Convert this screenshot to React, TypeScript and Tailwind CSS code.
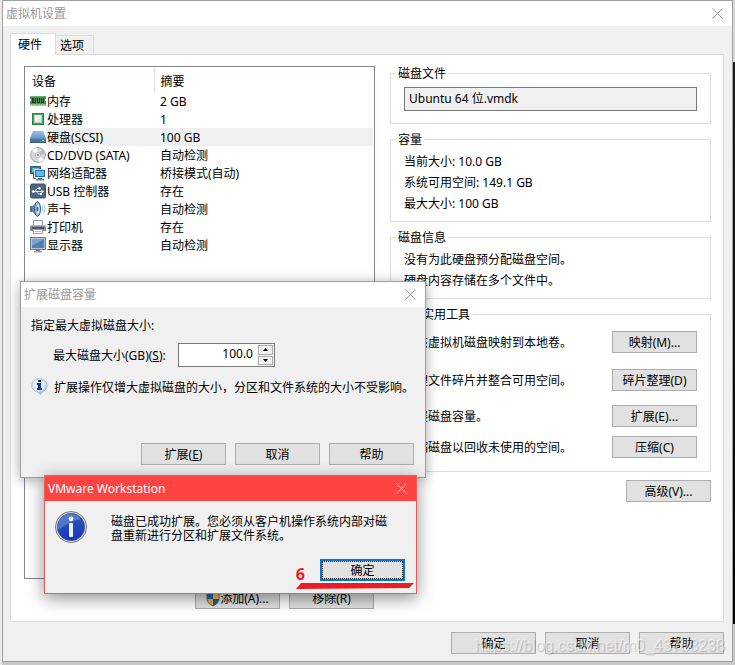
import type { ReactNode } from "react";

type Device = { name: string; summary: string; icon: ReactNode; selected?: boolean };

const MemoryIcon = () => (
    <svg width="16" height="16" viewBox="0 0 16 16" shapeRendering="crispEdges">
        <path d="M0 3h16v3h-1v2h1v5H0V8h1V6H0z" fill="#3a9a47" />
        <path d="M0 3h16v1H0z" fill="#5db867" />
        <path d="M0 11h16v2H0z" fill="#7cc57e" />
        <path d="M2 5h4v5H2zM7 5h3v5H7zM11 5h3v5h-3z" fill="#2c342d" />
        <path d="M4 5h1v4H4zM8 5h1v4H8zM12 5h1v4h-1z" fill="#69746a" />
        <path d="M1 12h1v1H1zM3 12h1v1H3zM5 12h1v1H5zM9 12h1v1H9zM11 12h1v1h-1zM13 12h1v1h-1z" fill="#e8d98a" />
    </svg>
);

const CpuIcon = () => (
    <svg width="16" height="16" viewBox="0 0 16 16" shapeRendering="crispEdges">
        <path d="M2 2h12v12H2z" fill="#1f8539" />
        <path d="M3 3h10v10H3z" fill="#4bab59" />
        <path d="M4 4h8v8H4z" fill="#c3c9c4" />
        <path d="M5 4h6v7H5z" fill="#f1f2f1" />
        <path d="M8 8h3v3H8z" fill="#dfe2df" />
    </svg>
);

const DiskIcon = () => (
    <svg width="16" height="16" viewBox="0 0 16 16">
        <defs>
            <linearGradient id="disk" x1="0" y1="0" x2="0" y2="1">
                <stop offset="0" stopColor="#9cc0e6" />
                <stop offset="1" stopColor="#6a98c9" />
            </linearGradient>
        </defs>
        <path d="M3 2h10l3 7H0z" fill="url(#disk)" />
        <path d="M0 9h16v5H0z" fill="#4a739f" />
        <path d="M0 9h16v1H0z" fill="#6a93bf" />
        <path d="M0 13h16v1H0z" fill="#365a80" />
        <path d="M12 11h2v1h-2z" fill="#8af08a" />
    </svg>
);

const DiscIcon = () => (
    <svg width="16" height="16" viewBox="0 0 16 16">
        <circle cx="8" cy="8" r="7.400" fill="#d5d9dd" stroke="#8d949b" strokeWidth=".8" />
        <path d="M8 8 2 3.500A7 7 0 0 1 7 1zM8 8l6 4.500A7 7 0 0 1 9 15z" fill="#f8f9fa" />
        <path d="M8 8 12.500 2.500A7 7 0 0 1 15 7z" fill="#b8bec4" />
        <circle cx="8" cy="8" r="2.600" fill="#f4f5f6" stroke="#a1a7ad" strokeWidth=".7" />
        <circle cx="8" cy="8" r="1" fill="#7d848b" />
    </svg>
);

const NetworkIcon = () => (
    <svg width="16" height="16" viewBox="0 0 16 16">
        <path d="M.5 1.500h10v7H.5z" fill="#2a79b5" stroke="#35597c" />
        <path d="M2 3h7v4H2z" fill="#60b2e2" />
        <path d="M3.500 9v4.500H6" fill="none" stroke="#4a5560" />
        <path d="M4.500 4.500h11v8h-11z" fill="#1c6dac" stroke="#e9f1f7" />
        <path d="M6 6h8v5H6z" fill="#64b9ea" />
        <path d="M8 13h4v1H8z" fill="#34597d" />
        <path d="M6 14h8v1.500H6z" fill="#6b8298" />
    </svg>
);

const UsbIcon = () => (
    <svg width="16" height="16" viewBox="0 0 16 16">
        <rect x=".5" y="1" width="15" height="14" rx="1.500" fill="#4c6580" stroke="#3d536b" />
        <path d="M3 8.500h9M5 8.500 7 5.500h2M6.500 8.500l2 2.500h2" fill="none" stroke="#fff" strokeWidth=".8" />
        <circle cx="3.300" cy="8.500" r="1.500" fill="#fff" />
        <circle cx="9.500" cy="5.300" r="1.200" fill="#fff" />
        <path d="M10 10h2v2h-2zM11.500 6.700l2.500 1.800-2.500 1.800z" fill="#fff" />
    </svg>
);

const SoundIcon = () => (
    <svg width="16" height="16" viewBox="0 0 16 16">
        <path d="M0 5.500 2.500 5 7 .8v14.400L2.500 11 0 10.500z" fill="#7793ae" />
        <path d="M0 5.500 2.500 5v6L0 10.500z" fill="#4b6884" />
        <ellipse cx="7.500" cy="8" rx="3" ry="7.300" fill="#8db7dd" stroke="#27527f" strokeWidth=".9" />
        <ellipse cx="8" cy="8" rx="1.500" ry="4.500" fill="#dcebf7" />
        <ellipse cx="7.500" cy="8" rx="1" ry="2.500" fill="#2e679d" />
        <path d="M12 5q1.500 3 0 6M13.800 3.500q2.500 4.500 0 9" fill="none" stroke="#86b4dd" strokeWidth=".9" />
    </svg>
);

const PrinterIcon = () => (
    <svg width="16" height="16" viewBox="0 0 16 16">
        <path d="M3.500 1.500h9v6h-9z" fill="#f7f8fa" stroke="#8f959d" />
        <path d="M1 6h14l1 2v4H0V8z" fill="#848b97" />
        <path d="M1 6h14v1H1z" fill="#b1b6be" />
        <path d="M2 8h12v2H2z" fill="#4b515d" />
        <path d="M3.500 10.500h9v4h-9z" fill="#fff" stroke="#9fa4ad" />
        <path d="M5 12h6v1H5z" fill="#b9bdc4" />
    </svg>
);

const DisplayIcon = () => (
    <svg width="16" height="16" viewBox="0 0 16 16">
        <path d="M.5.500h15v12H.5z" fill="#b6c6d6" stroke="#65788c" />
        <path d="M2 2h12v9H2z" fill="#4f7fb3" />
        <path d="M2 2h12L2 9z" fill="#7aa2cc" />
        <path d="M6 13h4v1H6z" fill="#788594" />
        <path d="M4 14h8v1.500H4z" fill="#96a1ad" />
    </svg>
);

const ShieldIcon = () => (
    <svg width="14" height="16" viewBox="0 0 14 16">
        <path d="M7 .5 13.500 3v5Q13 12.500 7 15.500 1 12.500 .5 8V3z" fill="#5b6570" />
        <path d="M7 1.500V8H1.400V3.600z" fill="#1d67b8" />
        <path d="M7 1.500V8h5.600V3.600z" fill="#f6c23c" />
        <path d="M7 8v6.500Q1.800 12 1.400 8z" fill="#f0b02c" />
        <path d="M7 8v6.500Q12.200 12 12.600 8z" fill="#1a5dab" />
    </svg>
);

const BalloonIcon = () => (
    <svg width="17" height="17" viewBox="0 0 17 17">
        <defs>
            <radialGradient id="balloon" cx=".4" cy=".3" r=".8">
                <stop offset="0" stopColor="#fff" />
                <stop offset=".6" stopColor="#d9e6f4" />
                <stop offset="1" stopColor="#6c95c6" />
            </radialGradient>
        </defs>
        <path d="M8.500.7a7.500 6.800 0 0 1 2.600 13.200L9.500 16.300 7 14.200A7.500 6.800 0 0 1 8.500.7z" fill="url(#balloon)" stroke="#8faed3" strokeWidth=".8" />
        <path d="M7 2h3v2H7zM6 5h4v5h1v2H6v-2h1V7H6z" fill="#16378f" />
    </svg>
);

const InfoIcon = () => (
    <svg width="32" height="32" viewBox="0 0 32 32" className="shrink-0">
        <defs>
            <linearGradient id="info" x1="0" y1="0" x2="0" y2="1">
                <stop offset="0" stopColor="#2e5cb8" />
                <stop offset="1" stopColor="#1734c4" />
            </linearGradient>
        </defs>
        <circle cx="16" cy="16" r="15.500" fill="#e8e8e8" stroke="#777" />
        <circle cx="16" cy="16" r="13.700" fill="url(#info)" stroke="#4a5a86" strokeWidth=".8" />
        <path d="M3 19A13 13 0 0 1 26 8Q16 10 3 19z" fill="#6d93d8" opacity=".6" />
        <circle cx="16" cy="7.800" r="2.400" fill="#fff" />
        <rect x="14" y="12" width="4" height="14" rx="1" fill="#f1f1f1" />
    </svg>
);

const CloseIcon = () => (
    <svg width="11" height="11" viewBox="0 0 11 11" fill="none" stroke="currentColor">
        <path d="M.5.5l10 10M10.500.5l-10 10" />
    </svg>
);

const devices: Device[] = [
    { name: "内存", summary: "2 GB", icon: <MemoryIcon /> },
    { name: "处理器", summary: "1", icon: <CpuIcon /> },
    { name: "硬盘(SCSI)", summary: "100 GB", icon: <DiskIcon />, selected: true },
    { name: "CD/DVD (SATA)", summary: "自动检测", icon: <DiscIcon /> },
    { name: "网络适配器", summary: "桥接模式(自动)", icon: <NetworkIcon /> },
    { name: "USB 控制器", summary: "存在", icon: <UsbIcon /> },
    { name: "声卡", summary: "自动检测", icon: <SoundIcon /> },
    { name: "打印机", summary: "存在", icon: <PrinterIcon /> },
    { name: "显示器", summary: "自动检测", icon: <DisplayIcon /> },
];

const tools = [
    { text: "将该虚拟机磁盘映射到本地卷。", button: "映射(M)..." },
    { text: "整理文件碎片并整合可用空间。", button: "碎片整理(D)" },
    { text: "扩展磁盘容量。", button: "扩展(E)..." },
    { text: "压缩磁盘以回收未使用的空间。", button: "压缩(C)" },
];

const Button = ({ children }: { children: ReactNode }) => (
    <button className="flex h-[22px] w-[85px] shrink-0 items-center justify-center border border-[#adadad] bg-[#e1e1e1] pt-[2px] whitespace-nowrap">
        {children}
    </button>
);

const Group = ({ title, children }: { title: string; children: ReactNode }) => (
    <fieldset className="border border-[#dcdcdc] px-[13px]">
        <legend className="-ml-2 h-[14px] px-[2px] leading-4">{title}</legend>
        {children}
    </fieldset>
);

const DeviceTable = () => (
    <div className="h-[513px] border border-[#828790] bg-white pt-px pr-px">
        <table className="w-full table-fixed border-collapse text-left">
            <thead>
                <tr className="h-6">
                    <th className="w-[129px] border-r border-[#e5e5e5] pt-[3px] pl-[7px] font-normal">设备</th>
                    <th className="pt-[3px] pl-[6px] font-normal">摘要</th>
                </tr>
            </thead>
            <tbody>
                {devices.map((d) => (
                    <tr key={d.name} className="h-[18px]">
                        <td className="p-0 pl-[5px]">
                            <div className="flex h-[18px] items-center">
                                {d.icon}
                                <span className={d.selected ? "h-[18px] flex-1 bg-[#f0f0f0] pl-px leading-5" : "h-[18px] flex-1 pl-px leading-5"}>
                                    {d.name}
                                </span>
                            </div>
                        </td>
                        <td className={d.selected ? "bg-[#f0f0f0] p-0 pl-[6px]" : "p-0 pl-[6px]"}>
                            <div className="h-[18px] leading-5">{d.summary}</div>
                        </td>
                    </tr>
                ))}
            </tbody>
        </table>
    </div>
);

const SettingsWindow = () => (
    <main className="mx-[2px] border border-[#a0a0a0] bg-[#f0f0f0]">
        <header className="flex h-[25px] items-center justify-between bg-white pr-[9px] pl-[3px] text-[#999999]">
            <h1>虚拟机设置</h1>
            <button aria-label="关闭"><CloseIcon /></button>
        </header>

        <div className="pt-[7px] pr-2 pl-[7px]">
            <div className="flex items-end" role="tablist">
                <button role="tab" aria-selected="true" className="z-10 -mb-px h-[22px] w-[46px] border border-b-0 border-[#dcdcdc] bg-white pr-[6px]">硬件</button>
                <button role="tab" className="h-[19px] w-[38px] border border-b-0 border-l-0 border-[#dcdcdc] pt-[2px] pr-[5px]">选项</button>
            </div>

            <section className="flex gap-[15px] border border-[#dcdcdc] bg-white pt-[11px] pr-3 pb-3 pl-[13px]">
                <div className="w-[351px] shrink-0">
                    <DeviceTable />
                    <div className="mt-2 flex justify-end gap-[9px] pr-px">
                        <Button><ShieldIcon />添加(A)...</Button>
                        <Button>移除(R)</Button>
                    </div>
                </div>

                <div className="flex min-w-0 flex-1 flex-col gap-2">
                    <Group title="磁盘文件">
                        <input
                            aria-label="磁盘文件"
                            readOnly
                            value="Ubuntu 64 位.vmdk"
                            className="mt-[7px] mb-3 block h-6 w-full border border-[#7a7a7a] bg-[#f0f0f0] px-1 pb-[2px]"
                        />
                    </Group>
                    <Group title="容量">
                        <div className="pt-[5px] pb-[7px] leading-[21px]">
                            <p>当前大小: 10.0 GB</p>
                            <p>系统可用空间: 149.1 GB</p>
                            <p>最大大小: 100 GB</p>
                        </div>
                    </Group>
                    <Group title="磁盘信息">
                        <div className="pt-[5px] pb-[7px] leading-[21px]">
                            <p>没有为此硬盘预分配磁盘空间。</p>
                            <p>硬盘内容存储在多个文件中。</p>
                        </div>
                    </Group>
                    <Group title="磁盘实用工具">
                        <div className="grid grid-rows-[38px_36px_31px_22px] pt-[10px] pb-[13px]">
                            {tools.map((t) => (
                                <div key={t.button} className="flex h-[22px] items-center justify-between">
                                    <span className="pt-[2px]">{t.text}</span>
                                    <Button>{t.button}</Button>
                                </div>
                            ))}
                        </div>
                    </Group>
                    <div className="flex justify-end">
                        <Button>高级(V)...</Button>
                    </div>
                </div>
            </section>

            <footer className="flex justify-end gap-[9px] pt-[10px] pb-[7px]">
                <Button>确定</Button>
                <Button>取消</Button>
                <Button>帮助</Button>
            </footer>
        </div>
    </main>
);

const ExpandDialog = () => (
    <div role="dialog" className="absolute top-[281px] left-5 z-20 w-[406px] border border-[#a0a0a0] bg-[#f0f0f0] shadow-[0_2px_12px_rgba(0,0,0,0.35)]">
        <header className="flex h-[25px] items-center justify-between bg-white pr-[9px] pl-[3px] text-[#999999]">
            <h2>扩展磁盘容量</h2>
            <button aria-label="关闭"><CloseIcon /></button>
        </header>
        <div className="pt-[11px] pr-[11px] pb-3 pl-[10px]">
            <p className="leading-4">指定最大虚拟磁盘大小:</p>
            <div className="mt-[9px] flex items-center pl-[22px]">
                <label htmlFor="size" className="w-[125px] pt-[2px]">最大磁盘大小(GB)(<u>S</u>):</label>
                <div className="flex h-6 w-[97px] border border-[#7a7a7a] bg-white">
                    <input id="size" defaultValue="100.0" className="w-0 flex-1 pr-1 pb-[2px] text-right" />
                    <div className="flex w-[17px] flex-col gap-px bg-[#f0f0f0] p-px">
                        <button aria-label="增加" className="flex flex-1 items-center justify-center border border-[#adadad]">
                            <svg width="5" height="3" viewBox="0 0 5 3"><path d="M0 3h5L2.500 0z" /></svg>
                        </button>
                        <button aria-label="减少" className="flex flex-1 items-center justify-center border border-[#adadad]">
                            <svg width="5" height="3" viewBox="0 0 5 3"><path d="M0 0h5L2.500 3z" /></svg>
                        </button>
                    </div>
                </div>
            </div>
            <div className="mt-[11px] flex items-center gap-[6px] whitespace-nowrap">
                <BalloonIcon />
                <p className="pt-[3px] leading-[14px]">扩展操作仅增大虚拟磁盘的大小，分区和文件系统的大小不受影响。</p>
            </div>
            <div className="mt-12 flex justify-end gap-[9px]">
                <Button>扩展(<u>E</u>)</Button>
                <Button>取消</Button>
                <Button>帮助</Button>
            </div>
        </div>
    </div>
);

const MessageBox = () => (
    <div role="alertdialog" className="absolute top-[475px] left-11 z-30 w-[373px] border border-[#f25a5a] bg-[#f0f0f0] shadow-[0_4px_16px_rgba(0,0,0,0.45)]">
        <header className="flex h-[25px] items-center justify-between bg-[#ff4343] pr-[9px] pl-[3px] text-white">
            <h2>VMware Workstation</h2>
            <button aria-label="关闭"><CloseIcon /></button>
        </header>
        <div className="flex gap-6 pt-[10px] pr-6 pl-[10px]">
            <InfoIcon />
            <p className="pt-[4px] leading-[14px]">磁盘已成功扩展。您必须从客户机操作系统内部对磁盘重新进行分区和扩展文件系统。</p>
        </div>
        <div className="flex items-end justify-end gap-[15px] pt-4 pr-[11px] pb-3">
            <span className="text-[16px] leading-[14px] font-bold text-[#ed1c24]">6</span>
            <button className="h-[22px] w-[85px] border-2 border-[#0078d7] bg-[#e1e1e1]">
                <span className="flex h-full items-center justify-center border border-dotted border-black pt-[2px]">确定</span>
            </button>
        </div>
        <svg className="absolute right-[2px] bottom-1 h-[6px] w-[118px]" viewBox="0 0 118 6">
            <path d="M5 0h113l-5 5-113 1z" fill="#ed1c24" />
        </svg>
    </div>
);

export default function App() {
    return (
        <div className="relative min-h-screen overflow-hidden bg-[linear-gradient(#d8d8d8_62px,#1c1c1c_62px,#000_624px,#c8c8c8_624px)] font-['Noto_Sans','Noto_Sans_CJK_SC',sans-serif] text-[12px] leading-4 text-black">
            <div className="absolute inset-y-0 left-0 w-[2px] bg-[#ebebeb]" />
            <SettingsWindow />
            <ExpandDialog />
            <MessageBox />
            <span className="pointer-events-none absolute right-[10px] bottom-[10px] z-40 font-['Liberation_Sans',sans-serif] text-[16px] leading-[18px] text-white/50 [text-shadow:1px_1px_1px_rgba(0,0,0,0.2)]">
                https://blog.csdn.net/m0_43783238
            </span>
        </div>
    );
}
